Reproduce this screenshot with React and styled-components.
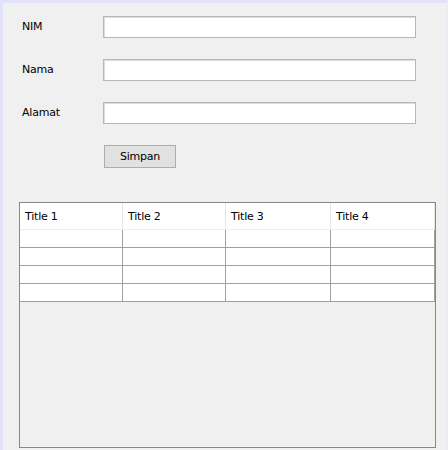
import React from "react";
import styled, { createGlobalStyle } from "styled-components";

const Global = createGlobalStyle`
  html, body { margin: 0; padding: 0; background: #f0f0f0; }
  body { font-family: "DejaVu Sans", Tahoma, Verdana, sans-serif; font-size: 11px; color: #000; }
  * { box-sizing: border-box; }
`;

const Frame = styled.div`
  width: 448px;
  height: 450px;
  background: #f0f0f0;
  border-top: 3px solid #e2e2f8;
  border-left: 3px solid #e2e2f8;
  border-right: 2px solid #ececf6;
  padding: 13px 0 0 16px;
  display: flex;
  flex-direction: column;
  overflow: hidden;
`;

const Form = styled.div`
  display: grid;
  grid-template-columns: 84px 313px;
  grid-template-rows: 22px 22px 22px 23px;
  row-gap: 21px;
  align-items: center;
`;

const Label = styled.label`
  padding-left: 3px;
  font-size: 11px;
  letter-spacing: -0.2px;
  line-height: 22px;
`;

const Input = styled.input`
  height: 22px;
  width: 313px;
  margin: 0;
  background: #fff;
  border: 1px solid #b7b7b7;
  box-shadow: inset 1px 1px 0 #dcdcdc;
  outline: none;
`;

const Button = styled.button`
  grid-column: 2;
  justify-self: start;
  margin-left: 1px;
  width: 72px;
  height: 23px;
  background: #e1e1e1;
  border: 1px solid #adadad;
  font-family: inherit;
  font-size: 11px;
  letter-spacing: -0.2px;
  color: #000;
  padding: 0;
`;

const Table = styled.div`
  margin-top: 34px;
  width: 417px;
  height: 246px;
  border: 1px solid #828790;
  background: #f0f0f0;
  display: flex;
  flex-direction: column;
`;

const Row = styled.div`
  display: grid;
  grid-template-columns: 103px 103px 105px 104px;
`;

const HeadCell = styled.div`
  height: 27px;
  background: #fff;
  border-right: 1px solid #e5e5e5;
  border-bottom: 1px solid #ececec;
  padding: 7px 0 0 5px;
  font-size: 11px;
  letter-spacing: -0.2px;
`;

const Cell = styled.div`
  height: 18px;
  background: #fff;
  border-right: 1px solid #a0a0a0;
  border-bottom: 1px solid #a0a0a0;
`;

const titles = ["Title 1", "Title 2", "Title 3", "Title 4"];

export default function App() {
  return (
    <>
      <Global />
      <Frame>
        <Form>
          <Label>NIM</Label>
          <Input />
          <Label>Nama</Label>
          <Input />
          <Label>Alamat</Label>
          <Input />
          <Button>Simpan</Button>
        </Form>
        <Table>
          <Row>
            {titles.map((t) => (
              <HeadCell key={t}>{t}</HeadCell>
            ))}
          </Row>
          {[0, 1, 2, 3].map((r) => (
            <Row key={r}>
              {titles.map((t) => (
                <Cell key={t} />
              ))}
            </Row>
          ))}
        </Table>
      </Frame>
    </>
  );
}
